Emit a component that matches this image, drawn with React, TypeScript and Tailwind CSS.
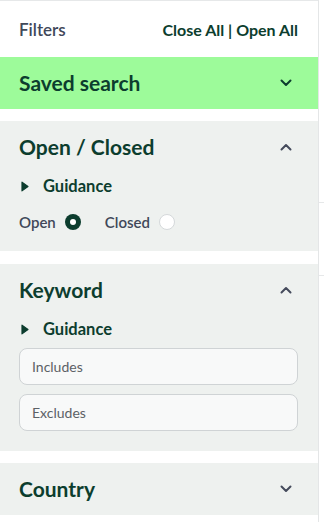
import React from 'react';

const green = 'text-[#0c3d2e]';

function Chevron({ up = false, dark = false }: { up?: boolean; dark?: boolean }) {
  return (
    <svg
      width="12"
      height="8"
      viewBox="0 0 12 8"
      fill="none"
      className={up ? 'rotate-180' : ''}
    >
      <path
        d="M1.5 1.5L6 6L10.5 1.5"
        stroke={dark ? '#0c3d2e' : '#454b5c'}
        strokeWidth="2"
        strokeLinecap="round"
        strokeLinejoin="round"
      />
    </svg>
  );
}

function Guidance() {
  return (
    <div className="flex h-5 items-center">
      <svg width="8" height="11" viewBox="0 0 8 11" className="ml-[2px]">
        <path d="M1 1.2 L7 5.5 L1 9.8 Z" fill="#0c3d2e" stroke="#0c3d2e" strokeWidth="1.2" strokeLinejoin="round" />
      </svg>
      <span className={`ml-[14px] text-[16.5px] font-bold ${green}`}>Guidance</span>
    </div>
  );
}

function SectionHeader({ title, open, dark }: { title: string; open?: boolean; dark?: boolean }) {
  return (
    <div className="flex h-[52px] items-center justify-between pr-[26px]">
      <span className={`text-[21px] font-bold ${green}`}>{title}</span>
      <Chevron up={open} dark={dark} />
    </div>
  );
}

function TextInput({ placeholder }: { placeholder: string }) {
  return (
    <div className="flex h-[37px] items-center rounded-[8px] border border-[#cfd3d5] bg-[#f8f9f9] px-3 text-[14px] text-[#5c6166]">
      {placeholder}
    </div>
  );
}

export default function App() {
  return (
    <div
      className="flex h-[522px] w-[324px] overflow-hidden bg-white"
      style={{ fontFamily: 'Lato, "Open Sans", sans-serif' }}
    >
      <div className="w-[319px] shrink-0 border-r border-[#e4e6e7]">
        {/* top bar */}
        <div className="flex h-[57px] items-center justify-between border-t border-[#e6e8e9] pl-[19px] pr-[20px] pt-[2px]">
          <span className="text-[17px] font-semibold text-[#404859]">Filters</span>
          <span className={`text-[16px] font-bold ${green}`}>Close All | Open All</span>
        </div>

        {/* saved search */}
        <div className="bg-[#9dfb9a] pl-[19px]">
          <SectionHeader title="Saved search" dark />
        </div>

        {/* open / closed */}
        <div className="mt-3 bg-[#eef1ef] pb-[19px] pl-[19px]">
          <SectionHeader title="Open / Closed" open />
          <div className="mt-[3px]">
            <Guidance />
          </div>
          <div className="mt-4 flex h-5 items-center text-[15px] font-semibold text-[#404859]">
            <span>Open</span>
            <span className="ml-[9px] flex h-4 w-4 items-center justify-center rounded-full bg-[#0c3d2e]">
              <span className="h-[6px] w-[6px] rounded-full bg-white" />
            </span>
            <span className="ml-6">Closed</span>
            <span className="ml-[9px] h-4 w-4 rounded-full border border-[#d5d9db] bg-white" />
          </div>
        </div>

        {/* keyword */}
        <div className="mt-[13px] bg-[#eef1ef] pb-5 pl-[19px] pr-5">
          <div className="-mr-5">
            <SectionHeader title="Keyword" open />
          </div>
          <div className="mt-[3px]">
            <Guidance />
          </div>
          <div className="mt-[9px] flex flex-col gap-[9px]">
            <TextInput placeholder="Includes" />
            <TextInput placeholder="Excludes" />
          </div>
        </div>

        {/* country */}
        <div className="mt-3 bg-[#eef1ef] pl-[19px]">
          <SectionHeader title="Country" />
        </div>
      </div>

      {/* edge of the neighbouring panel */}
      <div className="flex-1">
        <div className="mt-[202px] border-t border-[#e6e8e9]" />
        <div className="mt-[72px] border-t border-[#e6e8e9]" />
      </div>
    </div>
  );
}
